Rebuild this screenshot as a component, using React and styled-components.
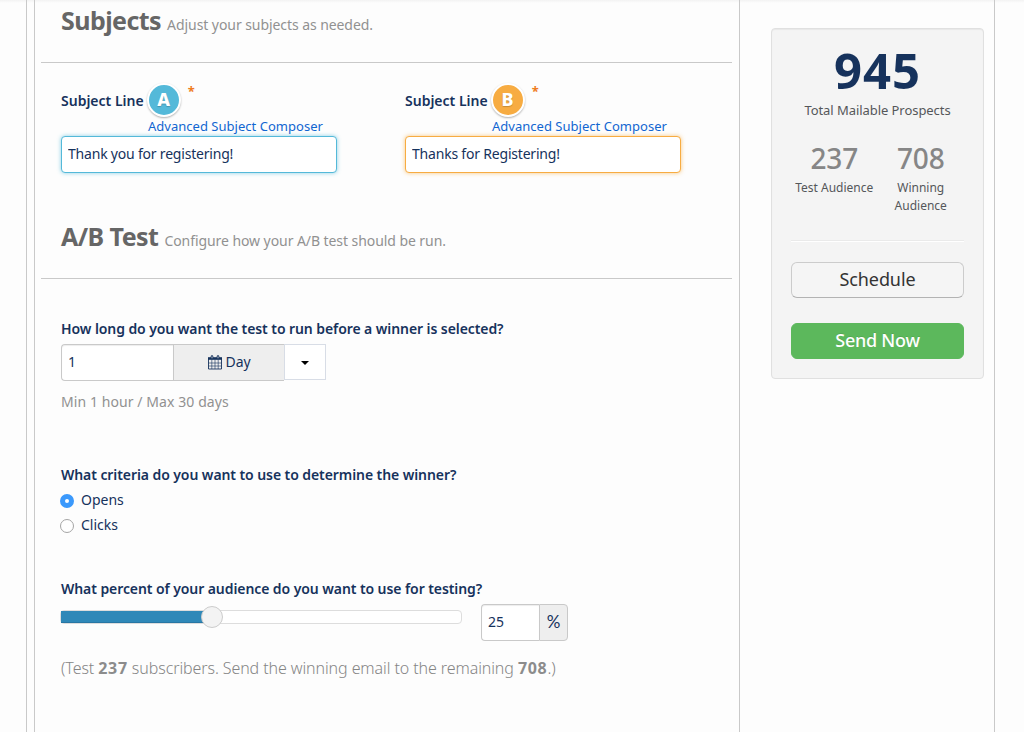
import React from "react"
import styled, { createGlobalStyle } from "styled-components"

const GlobalStyle = createGlobalStyle`
  * {
    box-sizing: border-box;
  }

  body {
    margin: 0;
    background: #fdfdfd;
    color: #16325c;
    font: 14px/20px "Noto Sans", "Open Sans", sans-serif;
    letter-spacing: -0.1px;
    overflow: hidden;
  }

  input,
  button {
    font: inherit;
    color: inherit;
    letter-spacing: inherit;
    outline: none;
  }
`

const Backdrop = styled.div`
  background: linear-gradient(#f3f3f3, #fdfdfd 3px);
`

const Page = styled.div`
  display: flex;
  width: 969px;
  height: 732px;
  margin-left: 26px;
  padding-left: 7px;
  border: solid #c9c9c9;
  border-width: 0 1px;
`

const Main = styled.main`
  width: 706px;
  padding: 0 7px 0 6px;
  border: solid #c9c9c9;
  border-width: 0 1px;
`

const SectionHeader = styled.header`
  display: flex;
  align-items: baseline;
  height: 63px;
  padding-left: 20px;
  border-bottom: 1px solid #c9c9c9;
  line-height: 40px;
`

const Title = styled.h2`
  margin: 0 6px 0 0;
  color: #666;
  font-size: 25px;
  font-weight: 700;
  letter-spacing: -0.55px;
`

const Subtitle = styled.small`
  color: #919191;
  font-size: 14px;
  letter-spacing: -0.07px;
`

const SectionBody = styled.div`
  padding: ${({ $top }) => $top}px 20px 0;
`

const Subjects = styled.div`
  display: flex;
  gap: 68px;
  margin-bottom: 43px;
`

const Field = styled.div`
  width: 276px;
`

const FieldLabel = styled.label`
  display: flex;
  align-items: center;
  height: 34px;
  font-weight: 600;
  letter-spacing: 0;
`

const LabelText = styled.span`
  padding-top: 2px;
`

const Badge = styled.span`
  width: 34px;
  height: 34px;
  margin-left: 3px;
  border: 2px solid #fff;
  border-radius: 50%;
  background: ${({ $color }) => $color};
  box-shadow: 0 1px 2px rgba(0, 0, 0, 0.3);
  color: #fff;
  font-size: 18px;
  font-weight: 800;
  line-height: 29px;
  text-align: center;
  text-shadow: 0 1px 1px rgba(0, 0, 0, 0.2);
`

const Required = styled.span`
  align-self: flex-start;
  margin: -2px 0 0 7px;
  color: #ef7c22;
  font-size: 13px;
  font-weight: 700;
`

const ComposerLink = styled.a`
  display: block;
  margin: 0 0 1px 87px;
  color: #1166d1;
  font-size: 13px;
  line-height: 18px;
  letter-spacing: 0.02px;
`

const SubjectInput = styled.input`
  display: block;
  width: 276px;
  height: 37px;
  padding: 0 6px 3px;
  border: 1px solid ${({ $color }) => $color};
  border-radius: 4px;
  background: #fff;
  box-shadow: 0 0 4px ${({ $color }) => $color}b0;
  letter-spacing: -0.2px;
`

const Question = styled.div`
  margin-top: ${({ $top = 0 }) => $top}px;
  font-weight: 600;
  letter-spacing: -0.08px;
`

const InputGroup = styled.div`
  display: flex;
  margin-top: 5px;
`

const GroupInput = styled.input`
  width: ${({ $width }) => $width}px;
  height: 37px;
  padding: 0 6px 3px;
  border: 1px solid #c9c9c9;
  border-right: 0;
  border-radius: 4px 0 0 4px;
  background: #fff;
  box-shadow: inset 0 1px 1px rgba(0, 0, 0, 0.075);
`

const AddOn = styled.span`
  display: flex;
  align-items: center;
  justify-content: center;
  gap: 4px;
  width: ${({ $width }) => $width}px;
  height: 37px;
  padding-bottom: 1px;
  border: 1px solid #c9c9c9;
  border-right-width: ${({ $last }) => ($last ? 1 : 0)}px;
  border-radius: ${({ $last }) => ($last ? "0 4px 4px 0" : 0)};
  background: #eee;
`

const Percent = styled.span`
  font-family: Lato, sans-serif;
  font-size: 17px;
`

const CaretButton = styled.button`
  display: flex;
  align-items: center;
  justify-content: center;
  width: 42px;
  height: 36px;
  padding: 1px 0 0;
  border: 1px solid #d8dde6;
  background: #fff;
`

const Caret = styled.i`
  border: solid transparent;
  border-width: 4px 4px 0;
  border-top-color: #000;
`

const Help = styled.div`
  margin-top: 11px;
  color: #919191;
  letter-spacing: 0.08px;
`

const Options = styled.div`
  margin: 2px 0 42px -1px;
`

const Option = styled.label`
  display: flex;
  align-items: center;
  gap: 7px;
  height: 25px;
  letter-spacing: 0;
`

const Radio = styled.span`
  width: 14px;
  height: 14px;
  margin-top: 3px;
  border: ${({ $checked }) => ($checked ? "5px solid #3b99fc" : "1px solid #a5a5a5")};
  border-radius: 50%;
  background: #fff;
`

const PercentRow = styled.div`
  display: flex;
  gap: 19px;
  margin-left: -1px;
`

const Track = styled.div`
  display: flex;
  align-items: center;
  width: 402px;
  height: 14px;
  margin-top: 11px;
  border: 1px solid #ddd;
  border-radius: 4px;
  background: #fff;
`

const Fill = styled.div`
  height: 12px;
  background: #2f88b8;
  box-shadow: inset 0 -1px 0 #2876a3;
`

const Knob = styled.span`
  flex: none;
  width: 22px;
  height: 22px;
  margin-left: -11px;
  border: 1px solid #ccc;
  border-radius: 50%;
  background: #f3f3f3;
`

const Summary = styled.p`
  margin: 15px 0 0;
  color: #858585;
  font-size: 16px;
  font-weight: 300;
  line-height: 24px;
  letter-spacing: -0.09px;

  b {
    color: #8c8c8c;
    font-weight: 700;
    letter-spacing: 0.7px;
  }
`

const Sidebar = styled.aside`
  width: 213px;
  height: 351px;
  margin: 28px 0 0 31px;
  padding: 19px;
  border: 1px solid #e0e0e0;
  border-radius: 4px;
  background: #f4f4f4;
  box-shadow: inset 0 1px 1px rgba(0, 0, 0, 0.05);
  color: #54575a;
  text-align: center;
`

const Total = styled.div`
  padding-top: 1px;
  color: #16325c;
  font-size: 49px;
  font-weight: 700;
  line-height: 42px;
  letter-spacing: 1px;
`

const TotalLabel = styled.div`
  margin-top: 10px;
  font-size: 13px;
  line-height: 18px;
  letter-spacing: -0.06px;
`

const Audiences = styled.div`
  display: grid;
  grid-template-columns: 1fr 1fr;
  margin: 25px 0;
`

const Count = styled.div`
  margin-bottom: 7px;
  color: #868686;
  font-size: 28px;
  font-weight: 500;
  line-height: 28px;
`

const CountLabel = styled.div`
  font-size: 12px;
  line-height: 18px;
  letter-spacing: 0;
`

const Rule = styled.div`
  height: 2px;
  margin-bottom: 20px;
  border-top: 1px solid #eaeaea;
  background: #fff;
`

const Button = styled.button`
  display: block;
  width: 173px;
  height: 36px;
  margin-bottom: 25px;
  padding: 0 0 3px;
  border: 1px solid #ccc;
  border-bottom-color: #b3b3b3;
  border-radius: 6px;
  background: #f5f5f5;
  color: #333;
  font-size: 18px;
`

const PrimaryButton = styled(Button)`
  border-color: #5cb85c;
  background: #5cb85c;
  color: #fff;
  font-weight: 500;
  letter-spacing: -0.25px;
  text-shadow: 0 -1px 0 rgba(0, 0, 0, 0.1);
`

const variants = [
  { letter: "A", color: "#54b9d9", subject: "Thank you for registering!" },
  { letter: "B", color: "#f7ac42", subject: "Thanks for Registering!" },
]

const audiences = [
  { count: 237, label: "Test Audience" },
  { count: 708, label: "Winning Audience" },
]

const CalendarIcon = () => (
  <svg width="14" height="15" viewBox="0 0 14 15" fill="none" stroke="#16325c">
    <path d="M.5 3.5h13v10.500h-13z" strokeWidth=".9" />
    <path d="M0 3.500h14" strokeWidth="2.600" />
    <path
      d="M3.800 4.500v9.500M7 4.500v9.500M10.200 4.500v9.500M.5 8h13M.5 11h13"
      strokeWidth=".6"
    />
    <path d="M4 1.500v1.500M10 1.500v1.500" strokeWidth="2.600" strokeLinecap="round" />
    <path d="M4 1.300v2M10 1.300v2" stroke="#eee" strokeWidth=".8" />
  </svg>
)

export default function App() {
  return (
    <Backdrop>
      <GlobalStyle />
      <Page>
        <Main>
          <SectionHeader>
            <Title>Subjects</Title>
            <Subtitle>Adjust your subjects as needed.</Subtitle>
          </SectionHeader>
          <SectionBody $top={20}>
            <Subjects>
              {variants.map(({ letter, color, subject }) => (
                <Field key={letter}>
                  <FieldLabel>
                    <LabelText>Subject Line</LabelText>
                    <Badge $color={color}>{letter}</Badge>
                    <Required>*</Required>
                  </FieldLabel>
                  <ComposerLink>Advanced Subject Composer</ComposerLink>
                  <SubjectInput $color={color} defaultValue={subject} />
                </Field>
              ))}
            </Subjects>
          </SectionBody>

          <SectionHeader>
            <Title>A/B Test</Title>
            <Subtitle>Configure how your A/B test should be run.</Subtitle>
          </SectionHeader>
          <SectionBody $top={40}>
            <Question>
              How long do you want the test to run before a winner is selected?
            </Question>
            <InputGroup>
              <GroupInput $width={112} defaultValue="1" />
              <AddOn $width={111}>
                <CalendarIcon />
                Day
              </AddOn>
              <CaretButton>
                <Caret />
              </CaretButton>
            </InputGroup>
            <Help>Min 1 hour / Max 30 days</Help>

            <Question $top={53}>
              What criteria do you want to use to determine the winner?
            </Question>
            <Options>
              <Option>
                <Radio $checked />
                Opens
              </Option>
              <Option>
                <Radio />
                Clicks
              </Option>
            </Options>

            <Question>
              What percent of your audience do you want to use for testing?
            </Question>
            <PercentRow>
              <Track>
                <Fill style={{ width: "37.8%" }} />
                <Knob />
              </Track>
              <InputGroup>
                <GroupInput $width={58} defaultValue="25" />
                <AddOn $width={29} $last>
                  <Percent>%</Percent>
                </AddOn>
              </InputGroup>
            </PercentRow>
            <Summary>
              (Test <b>237</b> subscribers. Send the winning email to the
              remaining <b>708</b>.)
            </Summary>
          </SectionBody>
        </Main>

        <Sidebar>
          <Total>945</Total>
          <TotalLabel>Total Mailable Prospects</TotalLabel>
          <Audiences>
            {audiences.map(({ count, label }) => (
              <div key={label}>
                <Count>{count}</Count>
                <CountLabel>{label}</CountLabel>
              </div>
            ))}
          </Audiences>
          <Rule />
          <Button>Schedule</Button>
          <PrimaryButton>Send Now</PrimaryButton>
        </Sidebar>
      </Page>
    </Backdrop>
  )
}
